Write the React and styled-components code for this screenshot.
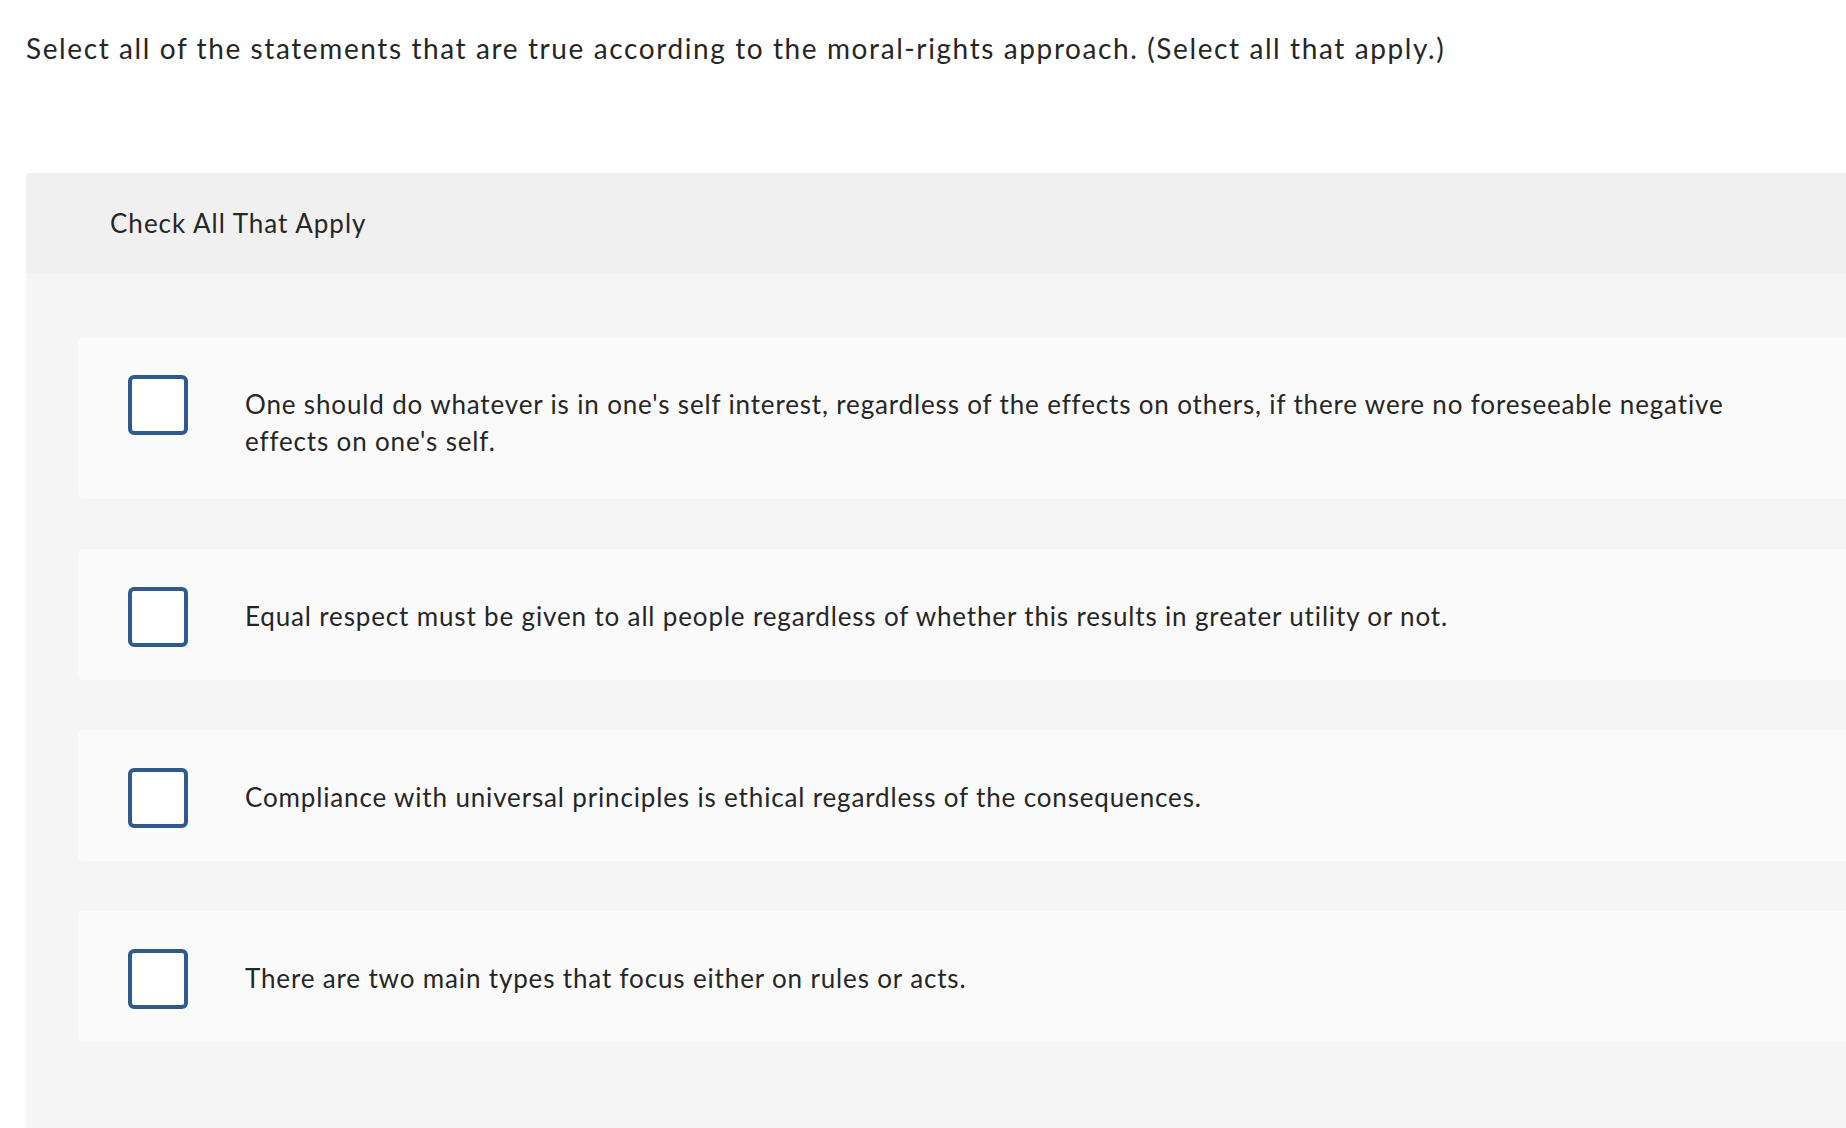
import styled, { createGlobalStyle } from "styled-components";

const GlobalStyle = createGlobalStyle`
  html, body {
    margin: 0;
    padding: 0;
    background: #ffffff;
    overflow-x: hidden;
  }
  body {
    font-family: Lato, "Liberation Sans", sans-serif;
    color: #262626;
  }
`;

const opcoes = [
  "One should do whatever is in one's self interest, regardless of the effects on others, if there were no foreseeable negative effects on one's self.",
  "Equal respect must be given to all people regardless of whether this results in greater utility or not.",
  "Compliance with universal principles is ethical regardless of the consequences.",
  "There are two main types that focus either on rules or acts.",
];

export default function App() {
  return (
    <>
      <GlobalStyle />
      <Pagina>
        <Pergunta>
          Select all of the statements that are true according to the moral-rights approach. (Select all that apply.)
        </Pergunta>

        <Painel>
          <Cabecalho>Check All That Apply</Cabecalho>
          <Lista>
            {opcoes.map((texto, index) => (
              <Opcao key={index}>
                <Caixa type="button" aria-label={`opção ${index + 1}`} />
                <TextoOpcao>{texto}</TextoOpcao>
              </Opcao>
            ))}
          </Lista>
        </Painel>
      </Pagina>
    </>
  );
}

const Pagina = styled.div`
  width: 100%;
  min-height: 1128px;
  overflow: hidden;
`;

const Pergunta = styled.div`
  margin: 29px 0 0 26px;
  font-size: 28px;
  line-height: 39px;
  letter-spacing: 1.6px;
  white-space: nowrap;
`;

const Painel = styled.div`
  margin: 105px 0 0 26px;
  width: 1900px;
  border-radius: 4px 0 0 0;
  overflow: hidden;
`;

const Cabecalho = styled.div`
  height: 100px;
  display: flex;
  align-items: center;
  padding-left: 84px;
  background-color: #f0f0f0;
  font-size: 26px;
  letter-spacing: 1px;
`;

const Lista = styled.div`
  background-color: #f5f5f5;
  padding: 64px 0 120px 52px;
  display: flex;
  flex-direction: column;
  gap: 50px;
`;

const Opcao = styled.div`
  display: flex;
  align-items: flex-start;
  background-color: #fafafa;
  border-radius: 5px 0 0 5px;
  padding: 38px 0 33px 50px;
`;

const Caixa = styled.button`
  flex-shrink: 0;
  width: 60px;
  height: 60px;
  box-sizing: border-box;
  margin: 0;
  padding: 0;
  border: 4px solid #2f5a8b;
  border-radius: 6px;
  background-color: #ffffff;
  cursor: pointer;
`;

const TextoOpcao = styled.div`
  margin-left: 57px;
  width: 1530px;
  padding: 11px 0 6px;
  font-size: 26px;
  line-height: 37px;
  letter-spacing: 0.85px;
`;
